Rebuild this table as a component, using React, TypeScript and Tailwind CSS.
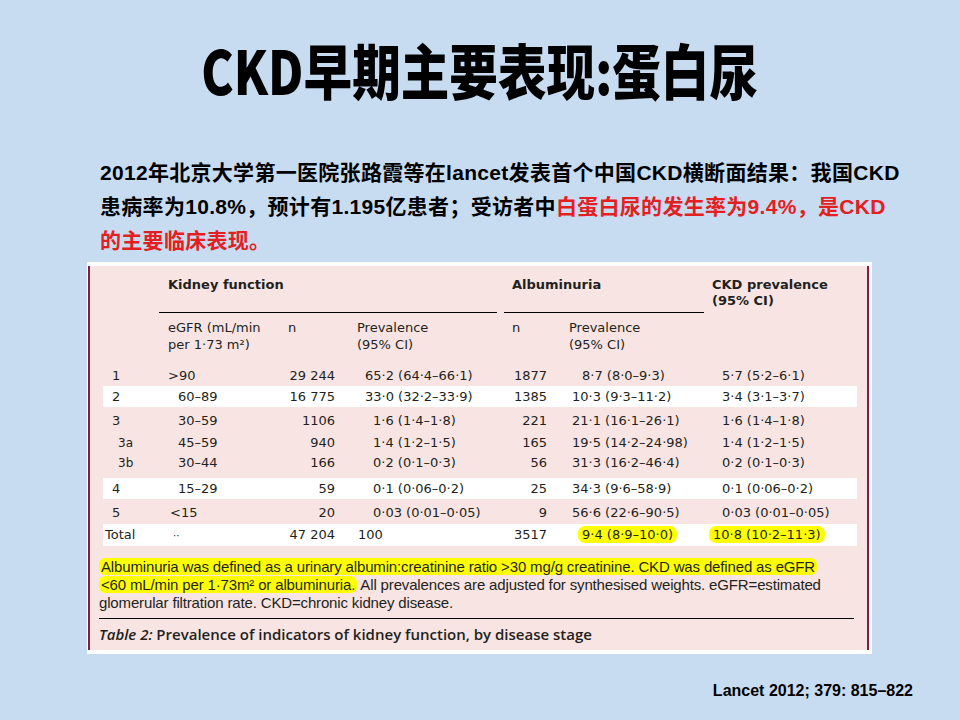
type Cells = {
  stage: string; egfr: string; n: string; prev: string; an: string; aprev: string; ckd: string;
  h: string; band?: boolean;
  sPad: string; ePad: string; pPad: string; aPad: string;
};

const ROWS: Cells[] = [
  { stage: "1", egfr: ">90", n: "29 244", prev: "65·2 (64·4–66·1)", an: "1877", aprev: "8·7 (8·0–9·3)", ckd: "5·7 (5·2–6·1)", h: "h-[21px]", sPad: "pl-[9px]", ePad: "pl-[9px]", pPad: "pl-[26px]", aPad: "pl-[28px]" },
  { stage: "2", egfr: "60–89", n: "16 775", prev: "33·0 (32·2–33·9)", an: "1385", aprev: "10·3 (9·3–11·2)", ckd: "3·4 (3·1–3·7)", h: "h-[21px]", band: true, sPad: "pl-[9px]", ePad: "pl-[19px]", pPad: "pl-[26px]", aPad: "pl-[18px]" },
];

const STAGE3: Cells[] = [
  { stage: "3", egfr: "30–59", n: "1106", prev: "1·6 (1·4–1·8)", an: "221", aprev: "21·1 (16·1–26·1)", ckd: "1·6 (1·4–1·8)", h: "h-[26px] pt-[2px]", sPad: "pl-[9px]", ePad: "pl-[19px]", pPad: "pl-[34px]", aPad: "pl-[18px]" },
  { stage: "3a", egfr: "45–59", n: "940", prev: "1·4 (1·2–1·5)", an: "165", aprev: "19·5 (14·2–24·98)", ckd: "1·4 (1·2–1·5)", h: "h-[20px]", sPad: "pl-[15px] text-[12px]", ePad: "pl-[19px]", pPad: "pl-[34px]", aPad: "pl-[18px]" },
  { stage: "3b", egfr: "30–44", n: "166", prev: "0·2 (0·1–0·3)", an: "56", aprev: "31·3 (16·2–46·4)", ckd: "0·2 (0·1–0·3)", h: "h-[20px]", sPad: "pl-[15px] text-[12px]", ePad: "pl-[19px]", pPad: "pl-[34px]", aPad: "pl-[18px]" },
];

const LATER: Cells[] = [
  { stage: "4", egfr: "15–29", n: "59", prev: "0·1 (0·06–0·2)", an: "25", aprev: "34·3 (9·6–58·9)", ckd: "0·1 (0·06–0·2)", h: "h-[21px]", band: true, sPad: "pl-[9px]", ePad: "pl-[19px]", pPad: "pl-[34px]", aPad: "pl-[18px]" },
  { stage: "5", egfr: "<15", n: "20", prev: "0·03 (0·01–0·05)", an: "9", aprev: "56·6 (22·6–90·5)", ckd: "0·03 (0·01–0·05)", h: "h-[25px] pt-[3px]", sPad: "pl-[9px]", ePad: "pl-[11px]", pPad: "pl-[34px]", aPad: "pl-[18px]" },
];

const GRID = "grid grid-cols-[56px_120px_60px_165px_50px_150px_150px]";

function Row({ stage, egfr, n, prev, an, aprev, ckd, h, band, sPad, ePad, pPad, aPad }: Cells) {
  return (
    <div className={`${GRID} ${h} items-center ${band ? "bg-white" : ""}`}>
      <div className={sPad}>{stage}</div>
      <div className={ePad}>{egfr}</div>
      <div className="pr-[4px] text-right">{n}</div>
      <div className={pPad}>{prev}</div>
      <div className="pr-[7px] text-right">{an}</div>
      <div className={aPad}>{aprev}</div>
      <div className="pl-[18px]">{ckd}</div>
    </div>
  );
}

export default function App() {
  return (
    <div className="relative flex h-[720px] w-[960px] flex-col overflow-hidden bg-[#c8dcf1] font-['Liberation_Sans','Noto_Sans_CJK_SC',sans-serif]">
      {/* title */}
      <h1 className="mt-[35px] text-center font-['Noto_Sans_CJK_SC',sans-serif] text-[60px] font-black leading-[68px] text-black">
        <span className="inline-block scale-x-[0.81]">CKD早期主要表现:蛋白尿</span>
      </h1>

      {/* summary */}
      <p className="ml-[100px] mt-[53px] text-[21px] font-bold leading-[34px] tracking-[0.3px] text-black">
        2012年北京大学第一医院张路霞等在lancet发表首个中国CKD横断面结果：我国CKD
        <br />
        患病率为10.8%，预计有1.195亿患者；受访者中
        <span className="text-[#e3201f]">白蛋白尿的发生率为9.4%，是CKD</span>
        <br />
        <span className="text-[#e3201f]">的主要临床表现。</span>
      </p>

      {/* table figure */}
      <div className="ml-[87px] mt-[4px] h-[392px] w-[785px] bg-white px-[1px] py-[4px]">
        <div className="h-full w-[781px] border-x-2 border-[#8a1b3c] bg-[#f8e5e3] pl-[13px] pr-[10px] font-['DejaVu_Sans',sans-serif] text-[13px] text-[#231f20]">
          {/* group header */}
          <div className={`${GRID} h-[47px]`}>
            <div />
            <div className="col-span-3 mr-[7px] border-b border-black pl-[9px] pt-[11px] font-bold leading-[16px]">Kidney function</div>
            <div className="col-span-2 border-b border-black pl-[8px] pt-[11px] font-bold leading-[16px]">Albuminuria</div>
            <div className="pl-[8px] pt-[11px] font-bold leading-[16px]">
              CKD prevalence
              <br />
              (95% CI)
            </div>
          </div>

          {/* column header */}
          <div className={`${GRID} h-[52px] pt-[6px] leading-[17px]`}>
            <div />
            <div className="pl-[9px]">
              eGFR (mL/min
              <br />
              per 1·73 m²)
            </div>
            <div className="pl-[9px]">n</div>
            <div className="pl-[18px]">
              Prevalence
              <br />
              (95% CI)
            </div>
            <div className="pl-[8px]">n</div>
            <div className="pl-[15px]">
              Prevalence
              <br />
              (95% CI)
            </div>
            <div />
          </div>

          {ROWS.map((r) => (
            <Row key={r.stage} {...r} />
          ))}
          <div className="pb-[5px]">
            {STAGE3.map((r) => (
              <Row key={r.stage} {...r} />
            ))}
          </div>
          {LATER.map((r) => (
            <Row key={r.stage} {...r} />
          ))}

          {/* total */}
          <div className={`${GRID} h-[22px] items-center bg-white`}>
            <div className="pl-[2px]">Total</div>
            <div className="pl-[14px] text-[10px]">··</div>
            <div className="pr-[4px] text-right">47 204</div>
            <div className="pl-[19px]">100</div>
            <div className="pr-[7px] text-right">3517</div>
            <div className="pl-[24px]">
              <span className="rounded-[7px] bg-[#ffff00] px-[4px] py-[1px]">9·4 (8·9–10·0)</span>
            </div>
            <div className="pl-[5px]">
              <span className="rounded-[7px] bg-[#ffff00] px-[4px] py-[1px]">10·8 (10·2–11·3)</span>
            </div>
          </div>

          {/* footnote */}
          <p className="-ml-[4px] mt-[12px] w-[755px] font-['Liberation_Sans',sans-serif] text-[15px] leading-[18px] tracking-[-0.15px] text-[#231f20]">
            <span className="box-decoration-clone rounded-[6px] bg-[#ffff00] px-[2px]">
              Albuminuria was defined as a urinary albumin:creatinine ratio &gt;30 mg/g creatinine. CKD was defined as eGFR
              <br />
              &lt;60 mL/min per 1·73m² or albuminuria.
            </span>{" "}
            All prevalences are adjusted for synthesised weights. eGFR=estimated
            <br />
            glomerular filtration rate. CKD=chronic kidney disease.
          </p>

          <div className="-ml-[4px] mt-[6px] w-[755px] border-t border-black pt-[5px] font-['Open_Sans',sans-serif] text-[15px] font-semibold leading-[20px]">
            <span className="italic">Table 2:</span> Prevalence of indicators of kidney function, by disease stage
          </div>
        </div>
      </div>

      {/* citation */}
      <div className="mr-[47px] mt-[27px] text-right text-[16px] font-bold leading-[20px] text-black">
        Lancet 2012; 379: 815–822
      </div>
    </div>
  );
}
